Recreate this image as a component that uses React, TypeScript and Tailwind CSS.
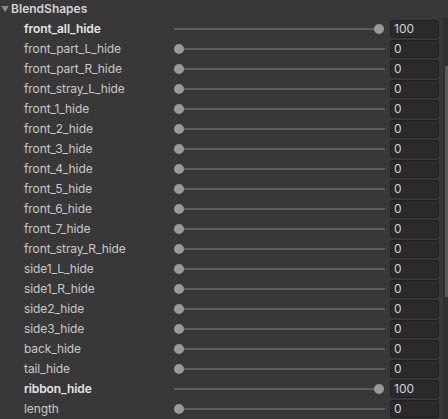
const shapes: { name: string; value: number }[] = [
  { name: "front_all_hide", value: 100 },
  { name: "front_part_L_hide", value: 0 },
  { name: "front_part_R_hide", value: 0 },
  { name: "front_stray_L_hide", value: 0 },
  { name: "front_1_hide", value: 0 },
  { name: "front_2_hide", value: 0 },
  { name: "front_3_hide", value: 0 },
  { name: "front_4_hide", value: 0 },
  { name: "front_5_hide", value: 0 },
  { name: "front_6_hide", value: 0 },
  { name: "front_7_hide", value: 0 },
  { name: "front_stray_R_hide", value: 0 },
  { name: "side1_L_hide", value: 0 },
  { name: "side1_R_hide", value: 0 },
  { name: "side2_hide", value: 0 },
  { name: "side3_hide", value: 0 },
  { name: "back_hide", value: 0 },
  { name: "tail_hide", value: 0 },
  { name: "ribbon_hide", value: 100 },
  { name: "length", value: 0 },
];

function Slider({ value }: { value: number }) {
  const pct = value / 100;
  return (
    <div className="relative h-5 flex-1">
      <div
        className="absolute top-[9px] left-0 h-[2px] bg-[#5e5e5e]"
        style={{ right: pct === 1 ? 6 : 0 }}
      />
      <div
        className="absolute top-[5px] h-[10px] w-[10px] rounded-full bg-[#999999]"
        style={{ left: `calc(${pct} * (100% - 11px))` }}
      />
    </div>
  );
}

function Row({ name, value }: { name: string; value: number }) {
  const bold = value !== 0;
  return (
    <div className="flex h-5 items-center">
      <div
        className={
          bold
            ? "w-[174px] shrink-0 pl-6 text-[12px] font-semibold tracking-[-0.1px] text-[#e4e4e4]"
            : "w-[174px] shrink-0 pl-6 text-[12px] tracking-[-0.1px] text-[#c8c8c8]"
        }
      >
        {name}
      </div>
      <Slider value={value} />
      <div className="ml-[5px] mr-[4px] flex h-[18px] w-[49px] shrink-0 items-center rounded-[3px] border border-[#212121] bg-[#2a2a2a] pl-[3px] text-[12px] text-[#d2d2d2]">
        {value}
      </div>
    </div>
  );
}

export default function App() {
  return (
    <div
      className="flex h-[419px] w-[448px] overflow-hidden bg-[#383838]"
      style={{ fontFamily: "Inter, 'Noto Sans', sans-serif" }}
    >
      <div className="flex flex-1 flex-col">
        <div className="flex h-[18px] items-center">
          <span className="ml-[1px] text-[8px] leading-none text-[#8a8a8a]">▼</span>
          <span className="ml-[2px] text-[12px] font-semibold text-[#d4d4d4]">BlendShapes</span>
        </div>
        <div className="mt-px flex flex-col">
          {shapes.map((s) => (
            <Row key={s.name} name={s.name} value={s.value} />
          ))}
        </div>
      </div>
      <div className="mt-[18px] flex w-[5px] flex-col bg-[#303030]">
        <div className="mt-[48px] ml-[2px] h-[231px] bg-[#5a5a5a]" />
      </div>
    </div>
  );
}
